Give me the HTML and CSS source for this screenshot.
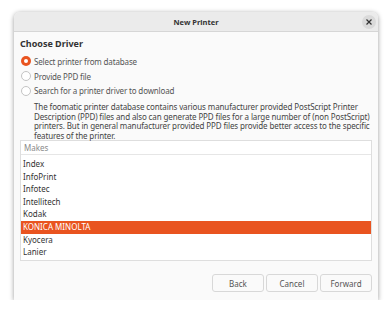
FILE: index.html
```html
<!DOCTYPE html>
<html lang="en">
<head>
    <meta charset="UTF-8">
    <title>New Printer</title>
    <link rel="stylesheet" href="styles.css">
</head>
<body>
    <div class="window">
        <div class="titlebar">
            <span></span>
            <span class="title">New Printer</span>
            <span class="close">
                <svg width="6" height="6" viewBox="0 0 6 6"><path d="M0.5 0.5 L5.5 5.5 M5.5 0.5 L0.5 5.5" stroke="#333" stroke-width="1.2"/></svg>
            </span>
        </div>

        <div class="content">
            <h2>Choose Driver</h2>

            <div class="option"><span class="radio checked"></span>Select printer from database</div>
            <div class="option"><span class="radio"></span>Provide PPD file</div>
            <div class="option"><span class="radio"></span>Search for a printer driver to download</div>

            <p class="desc">The foomatic printer database contains various manufacturer provided PostScript Printer<br>
                Description (PPD) files and also can generate PPD files for a large number of (non PostScript)<br>
                printers. But in general manufacturer provided PPD files provide better access to the specific<br>
                features of the printer.</p>

            <div class="list">
                <div class="list-head">Makes</div>
                <div class="list-body">
                    <div class="row first">HP</div>
                    <div class="row">Index</div>
                    <div class="row">InfoPrint</div>
                    <div class="row">Infotec</div>
                    <div class="row">Intellitech</div>
                    <div class="row">Kodak</div>
                    <div class="row selected">KONICA MINOLTA</div>
                    <div class="row">Kyocera</div>
                    <div class="row">Lanier</div>
                    <div class="row">Lexmark</div>
                </div>
            </div>

            <div class="buttons">
                <button class="btn">Back</button>
                <button class="btn">Cancel</button>
                <button class="btn">Forward</button>
            </div>
        </div>
    </div>
</body>
</html>
```

FILE: styles.css
```css
* { margin: 0; padding: 0; box-sizing: border-box; }
body { background: #ffffff; font-family: "Noto Sans", sans-serif; color: #3d3d3d; }

/* Window frame */
.window { width: 364px; height: 288px; margin: 12px 0 0 14px; background: #fafafa; border-radius: 6px 6px 0 0; box-shadow: 0 1px 5px rgba(0, 0, 0, 0.4); overflow: hidden; }
.titlebar { display: grid; grid-template-columns: 1fr auto 1fr; align-items: center; height: 20px; background: #ebebeb; border-bottom: 1px solid #d6d6d6; padding: 0 2px; }
.title { font-size: 7.5px; font-weight: bold; color: #333; }
.close { justify-self: end; width: 14px; height: 14px; border-radius: 50%; background: #dadada; display: flex; align-items: center; justify-content: center; }

/* Content */
.content { padding: 6px 6px 0 6px; }
.content h2 { font-size: 9px; font-weight: bold; color: #333; line-height: 12px; margin-bottom: 4px; }
.option { display: flex; align-items: center; height: 14.5px; font-size: 8px; letter-spacing: -0.15px; color: #555; padding-left: 1px; margin-top: 0.3px; }
.radio { width: 10px; height: 10px; border-radius: 50%; border: 1px solid #c4c4c4; background: #fff; margin-right: 3px; }
.radio.checked { border: none; background: #e95420; display: flex; align-items: center; justify-content: center; }
.radio.checked::after { content: ""; width: 4px; height: 4px; border-radius: 50%; background: #fff; }
.desc { font-size: 8px; letter-spacing: -0.12px; line-height: 9.5px; color: #444; white-space: nowrap; padding: 4px 0 0 14px; }

/* Makes list */
.list { height: 121px; border: 1px solid #dedede; background: #fff; }
.list-head { height: 14px; line-height: 13px; padding-left: 3px; font-size: 8px; color: #8a8a8a; border-bottom: 1px solid #e6e6e6; }
.list-body { height: 105px; overflow: hidden; }
.row { height: 12.6px; line-height: 12.6px; padding-left: 2px; font-size: 8px; color: #333; }
.row.first { margin-top: -9.6px; }
.row.selected { background: #e95420; color: #ffffff; }

/* Buttons */
.buttons { display: flex; justify-content: flex-end; gap: 2px; margin-top: 13px; }
.btn { width: 52px; height: 18px; font-family: inherit; font-size: 8px; color: #555; background: #fafafa; border: 1px solid #d8d8d8; border-radius: 3px; }
```
